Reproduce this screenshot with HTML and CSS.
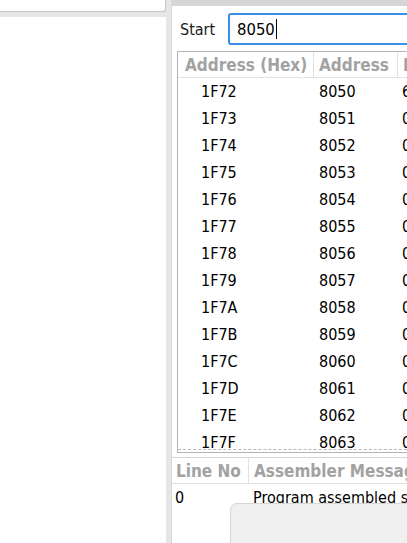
FILE: index.html
```html
<!DOCTYPE html>
<html>
<head>
<meta charset="utf-8">
<link rel="stylesheet" href="styles.css">
</head>
<body>
<div class="app">
  <div class="left">
    <div class="left-top"></div>
    <div class="left-body"></div>
  </div>
  <div class="split"></div>
  <div class="right">
    <div class="right-top"></div>
    <div class="start-row">
      <span class="start-label">Start</span>
      <div class="start-input">8050<span class="caret"></span></div>
    </div>
    <div class="mem-table">
      <div class="mem-head">
        <div class="c1">Address (Hex)</div>
        <div class="c2">Address</div>
        <div class="c3">Data</div>
      </div>
      <div class="mem-rows">
        <div class="mem-row"><div class="c1">1F72</div><div class="c2">8050</div><div class="c3">6</div></div>
        <div class="mem-row"><div class="c1">1F73</div><div class="c2">8051</div><div class="c3">0</div></div>
        <div class="mem-row"><div class="c1">1F74</div><div class="c2">8052</div><div class="c3">0</div></div>
        <div class="mem-row"><div class="c1">1F75</div><div class="c2">8053</div><div class="c3">0</div></div>
        <div class="mem-row"><div class="c1">1F76</div><div class="c2">8054</div><div class="c3">0</div></div>
        <div class="mem-row"><div class="c1">1F77</div><div class="c2">8055</div><div class="c3">0</div></div>
        <div class="mem-row"><div class="c1">1F78</div><div class="c2">8056</div><div class="c3">0</div></div>
        <div class="mem-row"><div class="c1">1F79</div><div class="c2">8057</div><div class="c3">0</div></div>
        <div class="mem-row"><div class="c1">1F7A</div><div class="c2">8058</div><div class="c3">0</div></div>
        <div class="mem-row"><div class="c1">1F7B</div><div class="c2">8059</div><div class="c3">0</div></div>
        <div class="mem-row"><div class="c1">1F7C</div><div class="c2">8060</div><div class="c3">0</div></div>
        <div class="mem-row"><div class="c1">1F7D</div><div class="c2">8061</div><div class="c3">0</div></div>
        <div class="mem-row"><div class="c1">1F7E</div><div class="c2">8062</div><div class="c3">0</div></div>
        <div class="mem-row"><div class="c1">1F7F</div><div class="c2">8063</div><div class="c3">0</div></div>
      </div>
      <div class="dash"></div>
    </div>
    <div class="msg">
      <div class="msg-head">
        <div class="m1">Line No</div>
        <div class="m2">Assembler Messages</div>
      </div>
      <div class="msg-row">
        <div class="m1">0</div>
        <div class="m2">Program assembled successfully</div>
      </div>
      <div class="popup"></div>
    </div>
  </div>
</div>
</body>
</html>
```
FILE: styles.css
```css
html, body {
  margin: 0;
  padding: 0;
  width: 407px;
  height: 543px;
  overflow: hidden;
  background: #ffffff;
}
.app {
  display: grid;
  grid-template-columns: 166px 5px 236px;
  height: 543px;
  font-family: "DejaVu Sans Condensed", "DejaVu Sans", sans-serif;
  font-stretch: condensed;
  font-size: 16px;
  color: #000;
}
.left {
  display: flex;
  flex-direction: column;
  background: #e6e6e6;
}
.left-top {
  height: 11px;
  background: #fff;
  border-bottom: 1px solid #c4c4c4;
  border-right: 1px solid #c4c4c4;
  border-bottom-right-radius: 3px;
}
.left-body {
  margin-top: 5px;
  flex: 1;
  background: #fff;
}
.split {
  background: #e6e6e6;
}
.right {
  position: relative;
  display: flex;
  flex-direction: column;
  background: #fff;
  overflow: hidden;
  border-left: 1px solid #d8d8d8;
}
.right-top {
  height: 6px;
  background: #d5d5d5;
}
.start-row {
  display: flex;
  align-items: center;
  margin-top: 7px;
  height: 32px;
}
.start-label {
  width: 56px;
  flex: none;
  padding-left: 8px;
  box-sizing: border-box;
  color: #1a1a1a;
}
.start-input {
  display: flex;
  align-items: center;
  flex: 1;
  height: 32px;
  margin-right: -20px;
  box-sizing: border-box;
  border: 2px solid #3a8ee6;
  border-radius: 3px;
  padding-left: 7px;
  font-size: 16.5px;
}
.caret {
  display: inline-block;
  width: 1px;
  height: 20px;
  background: #000;
  margin-left: 1px;
}
.mem-table {
  position: relative;
  margin-top: 6px;
  margin-left: 5px;
  margin-right: -20px;
  height: 402px;
  border: 1px solid #b4b4b4;
  border-right: none;
  overflow: hidden;
  box-sizing: border-box;
}
.mem-head, .mem-row {
  display: grid;
  grid-template-columns: 136px 84px 60px;
}
.mem-head {
  height: 25px;
  border-bottom: 1px solid #e2e2e2;
  font-weight: bold;
  color: #a2a2a2;
  font-size: 17px;
}
.mem-head > div {
  display: flex;
  align-items: center;
  padding-left: 5px;
  border-right: 1px solid #e2e2e2;
  white-space: nowrap;
  overflow: hidden;
}
.mem-head .c1 { padding-left: 7px; }
.mem-row {
  height: 27px;
}
.mem-row > div {
  display: flex;
  align-items: center;
  white-space: nowrap;
}
.mem-row .c1 { padding-left: 23px; }
.mem-row .c2 { padding-left: 5px; }
.mem-row .c3 { padding-left: 4px; }
.dash {
  position: absolute;
  left: 0;
  right: 0;
  bottom: 2px;
  border-top: 1px dashed #b8b8b8;
}
.msg {
  position: relative;
  flex: 1;
  margin-top: 4px;
  border-top: 1px solid #d4d4d4;
}
.msg-head, .msg-row {
  display: grid;
  grid-template-columns: 77px 200px;
}
.msg-head {
  height: 25px;
  border-bottom: 1px solid #e2e2e2;
  font-weight: bold;
  color: #a2a2a2;
  font-size: 17px;
}
.msg-head > div {
  display: flex;
  align-items: center;
  padding-left: 5px;
  border-right: 1px solid #e2e2e2;
  white-space: nowrap;
  overflow: hidden;
}
.msg-head .m1 { padding-left: 4px; }
.msg-row {
  height: 27px;
}
.msg-row > div {
  display: flex;
  align-items: center;
  white-space: nowrap;
}
.msg-row .m1 { padding-left: 3px; }
.msg-row .m2 { padding-left: 4px; }
.popup {
  position: absolute;
  left: 58px;
  top: 45px;
  width: 220px;
  height: 60px;
  background: #efefef;
  border: 1px solid #d6d6d6;
  border-radius: 7px 0 0 0;
}
```
